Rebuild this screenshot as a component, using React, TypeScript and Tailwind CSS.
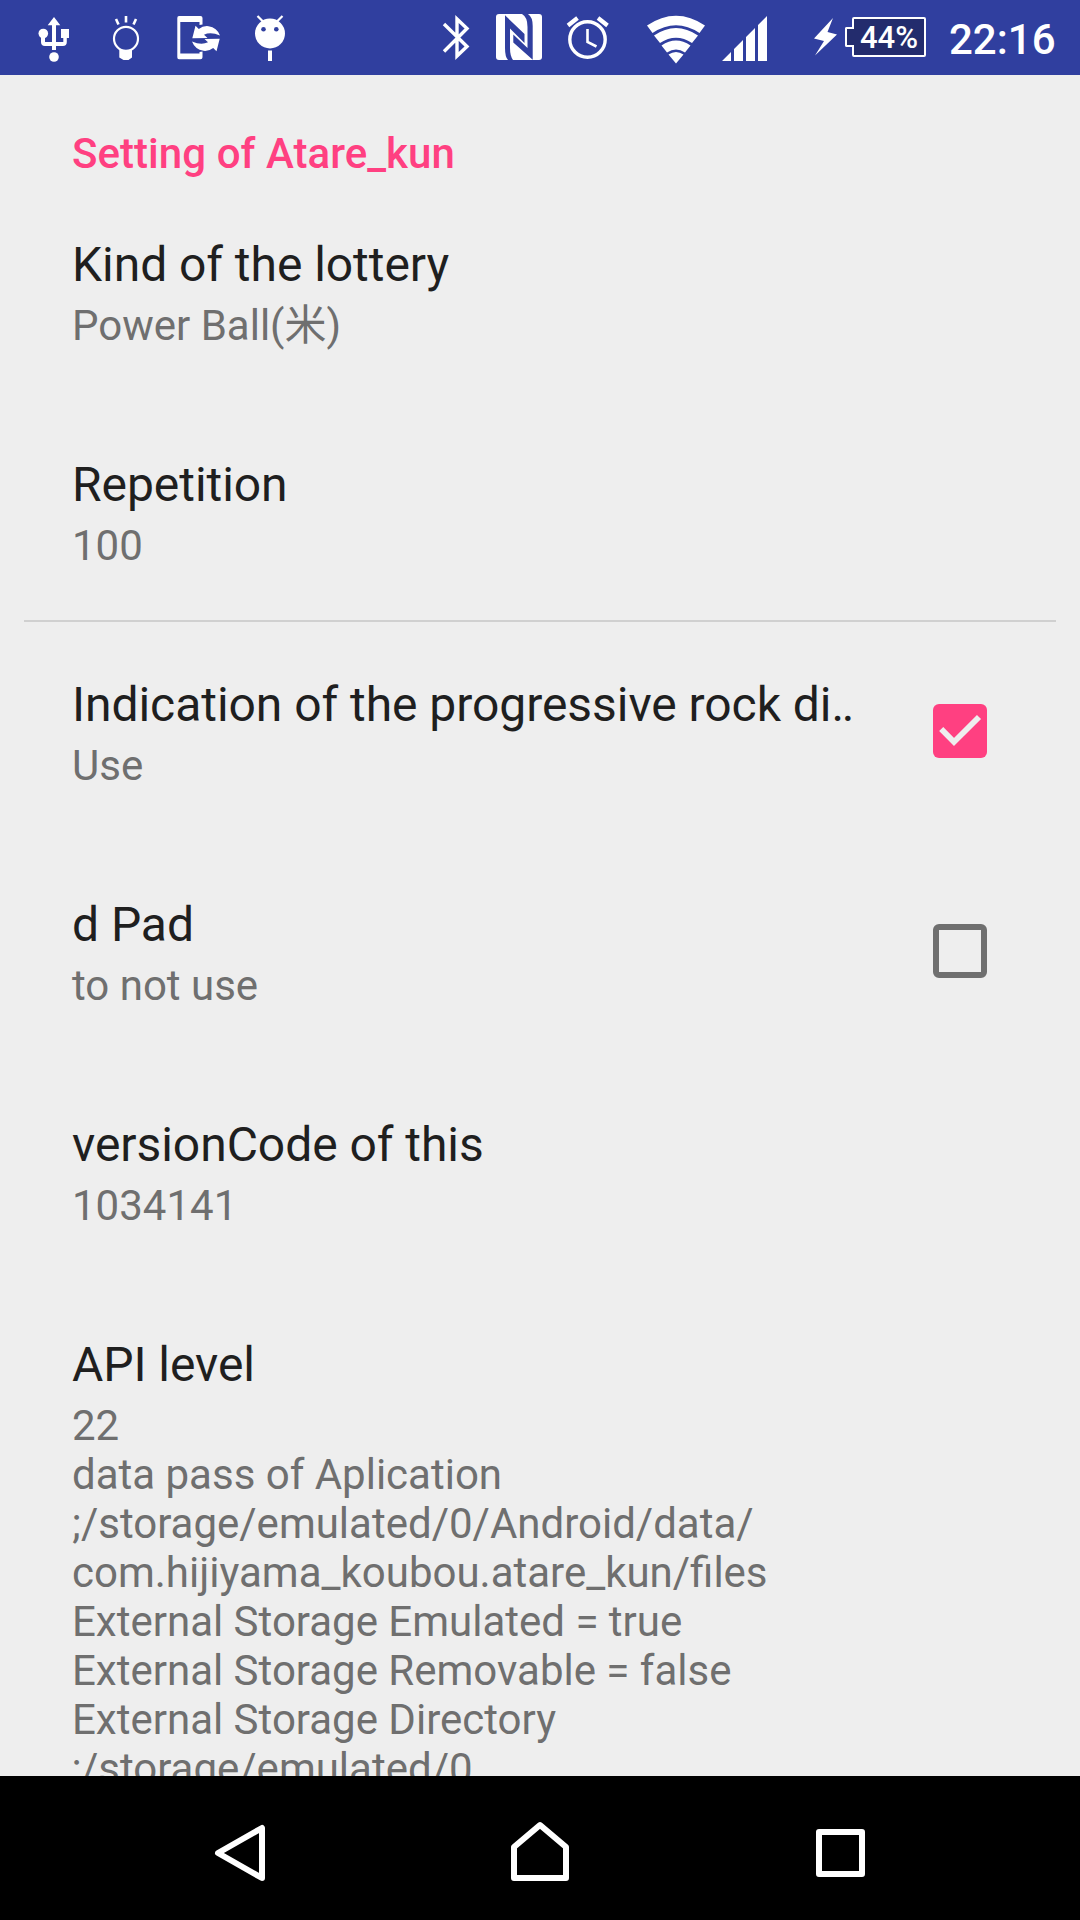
import type { ReactNode } from "react";

function StatusIcon({ box, className, children }: { box: string; className: string; children: ReactNode }) {
  return (
    <svg viewBox={box} className={`shrink-0 ${className}`} fill="white" stroke="none" aria-hidden="true">
      {children}
    </svg>
  );
}

function StatusBar() {
  return (
    <header className="flex h-[75px] shrink-0 bg-[#303f9f] text-white">
      <StatusIcon box="36 0 36 75" className="ml-[36px] h-[75px] w-[36px]">
        <path d="M54 17 60.3 25.3H56V42H63.3V38H61V29H69V38H66.8V42Q66.8 46 62.8 46H56V50H52V46H45Q41 46 41 42V37H45V42H52V25.3H47.7Z" />
        <circle cx="43.3" cy="33.5" r="4.8" />
        <circle cx="54" cy="57" r="4.8" />
      </StatusIcon>
      <StatusIcon box="110 0 32 75" className="ml-[38px] h-[75px] w-[32px]">
        <path d="M126 16V22.5M116 19 118.500 24.500M136 19 133.500 24.500" stroke="white" strokeWidth="2.6" fill="none" />
        <circle cx="126" cy="38.800" r="12" stroke="white" strokeWidth="2.200" fill="none" />
        <path d="M119.300 49Q126 52.500 132 49V57.500L128.500 60H123.500L119.300 57.500Z" />
      </StatusIcon>
      <StatusIcon box="176 0 46 75" className="ml-[34px] h-[75px] w-[46px]">
        <path d="M179 16H200.500Q202.500 16 202.500 18V24.500L199.500 25V22H180.300V53.500H199.500V52L202.500 51.500V57.300Q202.500 59.300 200.500 59.300H179Q177.300 59.300 177.300 57.300V18Q177.300 16 179 16Z" />
        <path d="M195.500 25.700 198.800 29Q203 25.600 208.500 26.200Q217 27.500 220 35.500Q210.500 31.500 204 34.800L207.500 38 192.300 38.300Z" />
        <path d="M216.500 51.300 213.200 48Q209 51.400 203.500 50.800Q195 49.500 192 41.500Q201.500 45.500 208 42.200L204.500 39 219.700 38.700Z" />
      </StatusIcon>
      <StatusIcon box="253 0 34 75" className="ml-[31px] h-[75px] w-[34px]">
        <circle cx="270" cy="33.500" r="15" />
        <path d="M257.500 16 264 22.500M282.500 16 276 22.500" stroke="white" strokeWidth="2.200" />
        <rect x="268" y="50.500" width="4" height="10.500" />
        <circle cx="263.500" cy="29.300" r="2.300" fill="#303f9f" />
        <circle cx="276.300" cy="29.300" r="2.300" fill="#303f9f" />
      </StatusIcon>
      <StatusIcon box="440 0 32 75" className="ml-[153px] h-[75px] w-[32px]">
        <path d="M444 24 467 46.500 457 56V19L467 28.500 444 51.500" fill="none" stroke="white" strokeWidth="3.400" />
      </StatusIcon>
      <StatusIcon box="496 0 46 75" className="ml-[24px] h-[75px] w-[46px]">
        <rect x="496" y="14" width="46" height="46" rx="3" />
        <path d="M505 15.300 524.500 34V43L510 28.500V48Q510 56 513 60H508Q505 57 505 48Z" fill="#303f9f" />
        <path d="M513.300 34.500 527.500 48V27Q527.500 17 522 14H528Q532.700 17 532.700 26V59.700L513.300 42.500Z" fill="#303f9f" />
      </StatusIcon>
      <StatusIcon box="565 0 46 75" className="ml-[23px] h-[75px] w-[46px]">
        <circle cx="587.500" cy="39.500" r="17.700" fill="none" stroke="white" strokeWidth="3.400" />
        <path d="M587.500 29V42L596.500 46.500" fill="none" stroke="white" strokeWidth="2.600" />
        <path d="M568 25.500 577.500 18M607.500 25.500 598 18" fill="none" stroke="white" strokeWidth="4.200" />
      </StatusIcon>
      <StatusIcon box="645 0 62 75" className="ml-[34px] h-[75px] w-[62px]">
        <path d="M676 63.500 668.500 54.500Q676 49.500 683.500 54.500Z" />
        <path d="M667 52.500 661.500 45.500Q676 35.500 690.500 45.500L685 52.500Q676 46.500 667 52.500Z" />
        <path d="M660 43 654 35.500Q676 20.500 698 35.500L692 43Q676 32.500 660 43Z" />
        <path d="M652.500 33 647 25.500Q676 6 705 25.500L699.500 33Q676 17.500 652.500 33Z" />
      </StatusIcon>
      <StatusIcon box="722 0 46 75" className="ml-[15px] h-[75px] w-[46px]">
        <path d="M722 61 731 52V61ZM734 49 743 40V61H734ZM746 37 755 28V61H746ZM758 25 767 16V61H758Z" />
      </StatusIcon>
      <StatusIcon box="812 0 28 75" className="ml-[44px] h-[75px] w-[28px]">
        <path d="M833 18 814 38.500 824 41 815 55.500 837 34.500 827.500 32Z" />
      </StatusIcon>
      <div className="z-10 ml-[5px] mt-[27px] h-5 w-[9px] rounded-l-[2px] border-2 border-r-0 border-white bg-[#232c6d]" />
      <div className="-ml-[2px] mt-[17px] h-10 w-[74px] rounded-[2px] border-2 border-white bg-[#232c6d] pl-[6px] text-[31px] leading-[37px] font-medium">
        44%
      </div>
      <time className="ml-[23px] pt-[15px] text-[42px] leading-[49px] font-medium">22:16</time>
    </header>
  );
}

function Preference({ title, children, widget }: { title: ReactNode; children: ReactNode; widget?: ReactNode }) {
  return (
    <section className="flex min-h-[220px] shrink-0 px-[72px] pt-[51px]">
      <div className="min-w-0 flex-1">
        <h2 className="text-[48px] leading-[64px] tracking-[-0.05px] whitespace-nowrap text-[#1f1f1f]">{title}</h2>
        <div className="pt-1 text-[42px] leading-[49px] text-[#6f6f6f]">{children}</div>
      </div>
      {widget && <div className="mr-[21px] pt-[31px]">{widget}</div>}
    </section>
  );
}

function CheckBox({ checked }: { checked: boolean }) {
  if (!checked) {
    return <div className="size-[54px] rounded-[6px] border-[6px] border-[#6f6f6f]" role="checkbox" aria-checked="false" />;
  }
  return (
    <div className="size-[54px] rounded-[6px] bg-[#ff4081]" role="checkbox" aria-checked="true">
      <svg viewBox="0 0 54 54" className="size-[54px]" fill="none" stroke="#eeeeee" strokeWidth="5.8">
        <path d="M8.200 25 21 38 46 13" />
      </svg>
    </div>
  );
}

function NavigationBar() {
  return (
    <nav className="flex h-36 shrink-0 items-start bg-black">
      <svg viewBox="210 1776 60 144" className="ml-[210px] h-36 w-[60px]" fill="none" stroke="white" strokeWidth="6" strokeLinejoin="round">
        <path d="M262 1828V1878L218 1853Z" />
      </svg>
      <svg viewBox="506 1776 68 144" className="ml-[236px] h-36 w-[68px]" fill="none" stroke="white" strokeWidth="6" strokeLinejoin="round">
        <path d="M514 1878V1847L540 1825 566 1847V1878Z" />
      </svg>
      <svg viewBox="812 1776 56 144" className="ml-[238px] h-36 w-[56px]" fill="none" stroke="white" strokeWidth="6" strokeLinejoin="round">
        <path d="M819 1832H862V1874H819Z" />
      </svg>
    </nav>
  );
}

export default function App() {
  return (
    <div className="flex h-[1920px] w-[1080px] flex-col overflow-hidden bg-[#eeeeee] font-['Roboto','Noto_Sans_CJK_JP',sans-serif]">
      <StatusBar />
      <main className="flex min-h-0 flex-1 flex-col overflow-hidden">
        <h1 className="h-[107px] shrink-0 px-[72px] pt-[54px] text-[42px] leading-[49px] tracking-[0.05px] font-medium text-[#ff4081]">
          Setting of Atare_kun
        </h1>
        <Preference title="Kind of the lottery">Power Ball(米)</Preference>
        <Preference title="Repetition">100</Preference>
        <hr className="mx-6 -mt-0.5 h-0.5 shrink-0 border-0 bg-[#d0d0d0]" />
        <Preference
          title={
            <>
              Indication of the progressive rock di<span className="tracking-[-2.500px]">..</span>
            </>
          }
          widget={<CheckBox checked />}
        >
          Use
        </Preference>
        <Preference title="d Pad" widget={<CheckBox checked={false} />}>
          to not use
        </Preference>
        <Preference title="versionCode of this">1034141</Preference>
        <Preference title="API level">
          <p>22</p>
          <p>data pass of Aplication</p>
          <p>;/storage/emulated/0/Android/data/</p>
          <p>com.hijiyama_koubou.atare_kun/files</p>
          <p>External Storage Emulated = true</p>
          <p>External Storage Removable = false</p>
          <p>External Storage Directory</p>
          <p>;/storage/emulated/0</p>
        </Preference>
      </main>
      <NavigationBar />
    </div>
  );
}
